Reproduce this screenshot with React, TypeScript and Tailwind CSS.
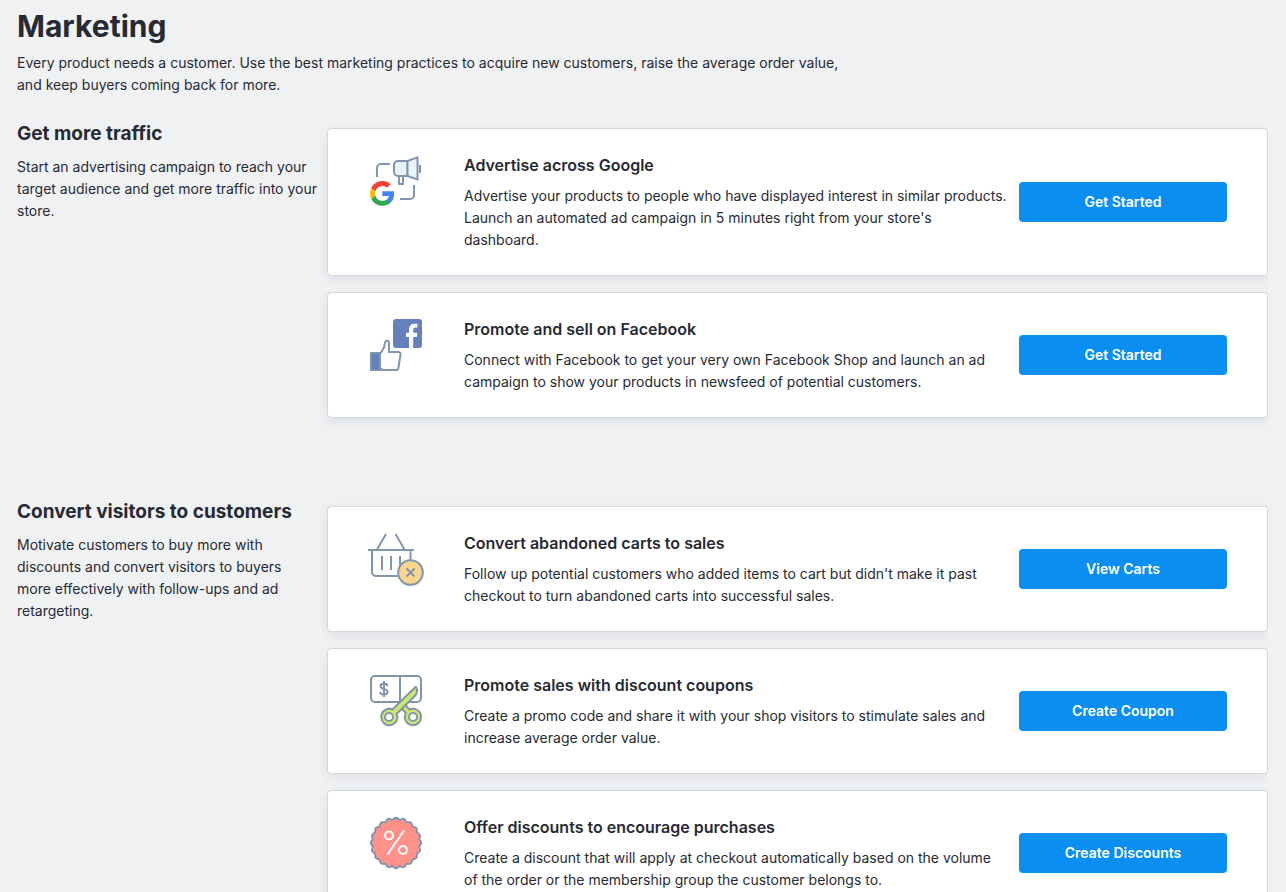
import { ReactNode } from "react";

const STROKE = "#8096ad";

const GoogleAdsIcon = () => (
  <svg className="w-14 h-14 shrink-0" viewBox="0 0 56 56" fill="none" aria-hidden="true">
    <g stroke={STROKE} strokeWidth="2">
      <path d="M9 24V15a4 4 0 0 1 4-4h9" />
      <path d="M46 32v10a4 4 0 0 1-4 4H32" />
      <path d="M31 23h4v8h-4z" fill="#fff" />
      <path d="M39.500 8H30a4 4 0 0 0-4 4v7a4 4 0 0 0 4 4h9.500z" fill="#e8f4fd" />
      <path d="M39.500 8l10-3.600v22l-10-3.400z" fill="#e8f4fd" />
      <path d="M52 12v8" />
    </g>
    <g transform="translate(0.900 27) scale(1.120)">
      <path fill="#4285F4" d="M22.560 12.250c0-.78-.07-1.530-.2-2.250H12v4.260h5.920c-.26 1.370-1.040 2.530-2.210 3.310v2.770h3.570c2.080-1.920 3.280-4.740 3.280-8.090z" />
      <path fill="#34A853" d="M12 23c2.970 0 5.460-.98 7.280-2.660l-3.570-2.770c-.98.66-2.230 1.060-3.710 1.060-2.860 0-5.290-1.930-6.160-4.530H2.180v2.840C3.990 20.530 7.700 23 12 23z" />
      <path fill="#FBBC05" d="M5.840 14.090c-.22-.66-.35-1.360-.35-2.090s.13-1.430.35-2.090V7.070H2.180C1.430 8.550 1 10.220 1 12s.43 3.450 1.180 4.930l3.660-2.840z" />
      <path fill="#EA4335" d="M12 5.380c1.620 0 3.060.56 4.210 1.640l3.150-3.150C17.450 2.090 14.970 1 12 1 7.700 1 3.990 3.470 2.180 7.070l3.660 2.840c.87-2.600 3.300-4.530 6.160-4.530z" />
    </g>
  </svg>
);

const FacebookIcon = () => (
  <svg className="w-14 h-14 shrink-0" viewBox="0 0 56 56" fill="none" aria-hidden="true">
    <rect x="25" y="2" width="29" height="29" rx="3" fill="#6480bd" />
    <path
      d="M41 31V20h-3v-4.300h3v-3c0-3.900 2.200-6 5.600-6h2.800v3.900h-1.700c-1.900 0-2.500.9-2.500 2.500v2.600h4.200l-.6 4.300h-3.600v11z"
      fill="#fff"
    />
    <rect x="3" y="36" width="9" height="17" fill="#6480bd" stroke={STROKE} strokeWidth="2" />
    <path
      d="M12 37l4-6.500 1-5c.4-2.300 4-2.300 4 .5v9h9.500c1.500 0 2.300 1 2 2.500l-2.200 14c-.2 1-.8 1.500-1.800 1.500H15l-3-1.500z"
      fill="#fff"
      stroke={STROKE}
      strokeWidth="2"
      strokeLinejoin="round"
    />
  </svg>
);

const CartIcon = () => (
  <svg className="w-14 h-14 shrink-0" viewBox="0 0 56 56" fill="none" stroke={STROKE} strokeWidth="2" aria-hidden="true">
    <path d="M18 3L9 18.500M27.500 3l9 15.500M0 19h46" />
    <path d="M4 19v22a4 4 0 0 0 4 4h24M42.500 19v11" />
    <path d="M14 25v14M23 25v14M32 25v9" />
    <circle cx="42.500" cy="41.500" r="12.300" fill="#fad58d" />
    <path d="M38.500 37.500l8 8M46.500 37.500l-8 8" />
  </svg>
);

const CouponIcon = () => (
  <svg className="w-14 h-14 shrink-0" viewBox="0 0 56 56" fill="none" stroke={STROKE} strokeWidth="2" aria-hidden="true">
    <rect x="3" y="3" width="50" height="26" rx="4" />
    <path d="M32 3v26" />
    <path d="M19.500 13c-.3-1.600-1.500-2.400-3.500-2.400-2.100 0-3.500 1-3.500 2.700 0 4 7.200 1.700 7.200 5.500 0 1.700-1.500 2.700-3.700 2.700s-3.600-.9-3.900-2.700M16 8v16" />
    <path
      d="M31 33l4-3 6.500 6.500a8.200 8.200 0 1 1-4.500 9.500c-.5-2.200-.2-4.200.8-6z"
      fill="#cfe86c"
      strokeLinejoin="round"
    />
    <path
      d="M47.800 13.800c2 3 1.500 6.500-.8 9L28.500 41c1 1.700 1.300 3.700.6 5.700a8.200 8.200 0 1 1-4.600-10.200z"
      fill="#cfe86c"
      strokeLinejoin="round"
    />
    <circle cx="21" cy="44" r="4" fill="#fff" />
    <circle cx="45" cy="44" r="4" fill="#fff" />
  </svg>
);

// Outline of the discount badge: a circle with 20 small waves
const badgePoints = Array.from({ length: 160 }, (_, i) => {
  const angle = (i / 160) * Math.PI * 2;
  const radius = 24.400 + 0.800 * Math.cos(angle * 20);
  return `${(28 + radius * Math.sin(angle)).toFixed(2)},${(28 - radius * Math.cos(angle)).toFixed(2)}`;
}).join(" ");

const DiscountIcon = () => (
  <svg className="w-14 h-14 shrink-0" viewBox="0 0 56 56" fill="none" aria-hidden="true">
    <polygon points={badgePoints} fill="#ff9189" stroke={STROKE} strokeWidth="2" />
    <g stroke="#fff" strokeWidth="2">
      <path d="M36 15.500L19.500 39.500" />
      <circle cx="21" cy="20.500" r="4" />
      <circle cx="35" cy="35" r="4" />
    </g>
  </svg>
);

interface Feature {
  title: string;
  text: string;
  action: string;
  icon: ReactNode;
}

interface Group {
  title: string;
  text: string;
  features: Feature[];
}

const groups: Group[] = [
  {
    title: "Get more traffic",
    text: "Start an advertising campaign to reach your target audience and get more traffic into your store.",
    features: [
      {
        title: "Advertise across Google",
        text: "Advertise your products to people who have displayed interest in similar products. Launch an automated ad campaign in 5 minutes right from your store's dashboard.",
        action: "Get Started",
        icon: <GoogleAdsIcon />,
      },
      {
        title: "Promote and sell on Facebook",
        text: "Connect with Facebook to get your very own Facebook Shop and launch an ad campaign to show your products in newsfeed of potential customers.",
        action: "Get Started",
        icon: <FacebookIcon />,
      },
    ],
  },
  {
    title: "Convert visitors to customers",
    text: "Motivate customers to buy more with discounts and convert visitors to buyers more effectively with follow-ups and ad retargeting.",
    features: [
      {
        title: "Convert abandoned carts to sales",
        text: "Follow up potential customers who added items to cart but didn't make it past checkout to turn abandoned carts into successful sales.",
        action: "View Carts",
        icon: <CartIcon />,
      },
      {
        title: "Promote sales with discount coupons",
        text: "Create a promo code and share it with your shop visitors to stimulate sales and increase average order value.",
        action: "Create Coupon",
        icon: <CouponIcon />,
      },
      {
        title: "Offer discounts to encourage purchases",
        text: "Create a discount that will apply at checkout automatically based on the volume of the order or the membership group the customer belongs to.",
        action: "Create Discounts",
        icon: <DiscountIcon />,
      },
    ],
  },
];

const FeatureCard = ({ title, text, action, icon }: Feature) => (
  <article className="flex gap-10 rounded border border-[#cfd8e1] bg-white px-10 py-6 shadow-[0_4px_12px_rgba(39,43,54,0.08)]">
    {icon}
    <div className="flex flex-1 items-center gap-3">
      <div className="flex-1">
        <h3 className="mb-2 text-base leading-6 font-semibold">{title}</h3>
        <p className="text-sm leading-[22px]">{text}</p>
      </div>
      <button
        type="button"
        className="h-10 w-52 shrink-0 rounded bg-[#0a8ff0] text-sm font-semibold text-white hover:bg-[#087fd6]"
      >
        {action}
      </button>
    </div>
  </article>
);

const App = () => {
  return (
    <main className="min-h-screen bg-[#f0f1f3] pt-1 pr-[18px] pl-[17px] font-['Inter',sans-serif] text-[#272a33]">
      {/* Page header */}
      <header className="mb-6">
        <h1 className="mb-1 text-3xl leading-11 font-bold">Marketing</h1>
        <p className="max-w-[840px] text-sm leading-[22px]">
          Every product needs a customer. Use the best marketing practices to acquire new customers, raise the
          average order value, and keep buyers coming back for more.
        </p>
      </header>

      {groups.map((group) => (
        <section key={group.title} className="flex">
          <div className="w-[302px] shrink-0">
            <h2 className="mb-2 text-[19px] leading-7 font-bold whitespace-nowrap">{group.title}</h2>
            <p className="text-sm leading-[22px]">{group.text}</p>
          </div>
          {/* Clips the card shadows on the right edge */}
          <div className="flex flex-1 flex-col gap-4 overflow-hidden pt-2 pb-20 pl-2">
            {group.features.map((feature) => (
              <FeatureCard key={feature.title} {...feature} />
            ))}
          </div>
        </section>
      ))}
    </main>
  );
};

export default App;
